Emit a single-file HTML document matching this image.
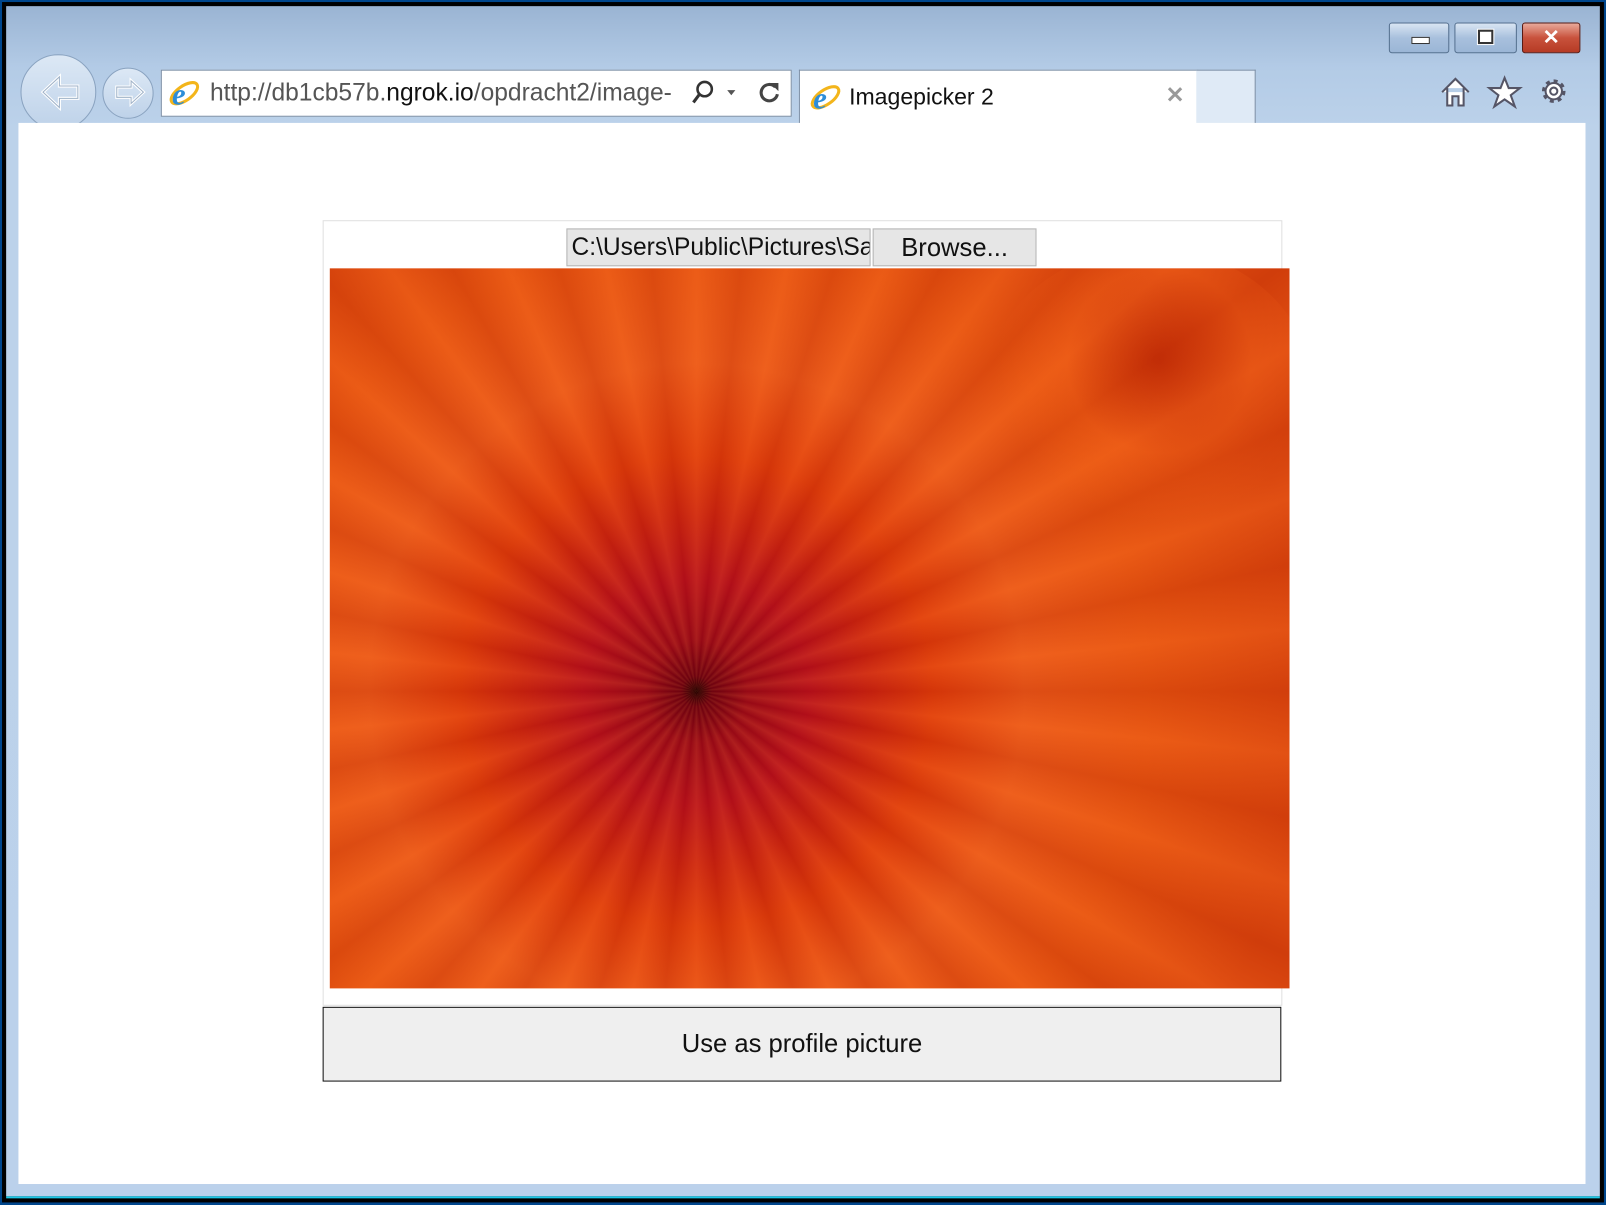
<!DOCTYPE html>
<html><head><meta charset="utf-8"><style>
html,body{margin:0;padding:0;width:1606px;height:1204px;overflow:hidden;background:#00468c;}
#w{position:absolute;left:0;top:0;width:1568px;height:1176px;transform:scale(1.02423);transform-origin:0 0;font-family:"Liberation Sans",sans-serif;}
.frame{position:absolute;left:2px;top:2px;right:2px;bottom:2px;background:#000;}
.inner{position:absolute;left:4px;top:4px;right:4px;bottom:4px;background:linear-gradient(#9ab4d3 0,#b3cbe6 60px,#bcd2ea 120px,#bbd1eb 100%);border-bottom:2px solid #1ec8e6;}
.client{position:absolute;left:18px;top:120px;width:1530px;height:1036px;background:#fff;}
.wb{position:absolute;top:22px;height:28px;border:1px solid #55708f;border-radius:3px;background:linear-gradient(#d9e5f3,#a8c0dd 50%,#9bb6d6);}
.abs{position:absolute;}
</style></head><body><div id="w">
<div class="frame"><div class="inner"></div></div>
<div class="wb" style="left:1356px;width:57px"><div class="abs" style="left:21px;top:13px;width:16px;height:5px;background:#fff;border:1px solid #333;"></div></div>
<div class="wb" style="left:1420px;width:59px"><div class="abs" style="left:22px;top:6px;width:11px;height:10px;border:2px solid #333;background:#fff;box-shadow:0 0 0 1px #fff;"></div></div>
<div class="wb" style="left:1486px;width:55px;background:linear-gradient(#e9a99a,#c8523c 50%,#b63b25);border-color:#5a1a12;color:#fff;font-weight:bold;font-size:20px;text-align:center;line-height:28px;">✕</div>
<div class="abs" style="left:20px;top:53px;width:72px;height:72px;border-radius:50%;border:1px solid #8aa3c0;background:linear-gradient(#dce8f5,#bed2e9);"></div>
<div class="abs" style="left:100px;top:66px;width:48px;height:48px;border-radius:50%;border:1px solid #8aa3c0;background:linear-gradient(#dce8f5,#bed2e9);"></div>
<svg class="abs" style="left:20px;top:53px" width="130" height="74"><path d="M22 37 L38 22 L38 31 L56 31 L56 43 L38 43 L38 52 Z" fill="none" stroke="#fff" stroke-width="3"/><path d="M22 37 L38 22 L38 31 L56 31 L56 43 L38 43 L38 52 Z" fill="none" stroke="#9fb2c8" stroke-width="1"/><path d="M120 37 L108 26 L108 32 L94 32 L94 42 L108 42 L108 48 Z" fill="none" stroke="#fff" stroke-width="3"/><path d="M120 37 L108 26 L108 32 L94 32 L94 42 L108 42 L108 48 Z" fill="none" stroke="#9fb2c8" stroke-width="1"/></svg>
<div class="abs" style="left:157px;top:68px;width:614px;height:44px;border:1px solid #7b8ea5;background:#fff;"></div>
<svg class="abs" style="left:163px;top:74px" width="34" height="34"><ellipse cx="17" cy="17" rx="15" ry="7" fill="none" stroke="#f3b51b" stroke-width="3" transform="rotate(-35 17 17)"/><text x="5" y="28" font-size="30" font-family="Liberation Serif" fill="#2d8dd8" font-style="italic" font-weight="bold">e</text></svg>
<div class="abs" style="left:205px;top:77px;font-size:24px;color:#555;white-space:nowrap;">http://db1cb57b.<span style="color:#111">ngrok.io</span>/opdracht2/image-</div>
<svg class="abs" style="left:672px;top:76px" width="100" height="30"><circle cx="16" cy="11" r="7" fill="none" stroke="#333" stroke-width="2.5"/><path d="M11 16 L5 24" stroke="#333" stroke-width="3"/><path d="M38 12 L46 12 L42 17Z" fill="#555"/><path d="M85 9 A8 8 0 1 0 87 16" fill="none" stroke="#444" stroke-width="3"/><path d="M80 5 L88 5 L88 13Z" fill="#444"/></svg>
<div class="abs" style="left:780px;top:68px;width:388px;height:53px;border:1px solid #7b8ea5;border-bottom:none;background:#fff;"></div>
<div class="abs" style="left:1168px;top:68px;width:57px;height:52px;border:1px solid #7b8ea5;border-left:none;border-bottom:none;background:#dfeaf6;"></div>
<svg class="abs" style="left:789px;top:78px" width="34" height="34"><ellipse cx="17" cy="17" rx="15" ry="7" fill="none" stroke="#f3b51b" stroke-width="3" transform="rotate(-35 17 17)"/><text x="5" y="28" font-size="30" font-family="Liberation Serif" fill="#2d8dd8" font-style="italic" font-weight="bold">e</text></svg>
<div class="abs" style="left:829px;top:82px;font-size:22.5px;color:#111;">Imagepicker 2</div>
<div class="abs" style="left:1138px;top:80px;font-size:22px;color:#999;font-weight:bold;">✕</div>
<svg class="abs" style="left:1404px;top:72px" width="132" height="36"><path d="M4 18 L17 5 L30 18 M9 14 V31 H14 V22 H20 V31 H25 V14" fill="#fff" stroke="#556" stroke-width="2"/><path d="M65 4 L69 14 L80 14 L71 21 L75 32 L65 25 L55 32 L59 21 L50 14 L61 14Z" fill="#fff" stroke="#556" stroke-width="2"/><circle cx="113" cy="17" r="9" fill="#fff" stroke="#556" stroke-width="5" stroke-dasharray="3.5 3.5"/><circle cx="113" cy="17" r="8" fill="#fff" stroke="#556" stroke-width="2"/><circle cx="113" cy="17" r="3.5" fill="none" stroke="#556" stroke-width="2"/></svg>
<div class="client"></div>
<div class="abs" style="left:315px;top:215px;width:935px;height:765px;border:1px solid #e0e0e0;"></div>
<div class="abs" style="left:553px;top:223px;width:297px;height:37px;border:1px solid #b4b4b4;background:#e6e6e6;overflow:hidden;white-space:nowrap;font-size:24px;line-height:36px;color:#111;padding-left:4px;box-sizing:border-box;">C:\Users\Public\Pictures\Sample</div>
<div class="abs" style="left:852px;top:223px;width:160px;height:37px;border:1px solid #b4b4b4;background:#e6e6e6;font-size:25px;line-height:36px;text-align:center;color:#111;box-sizing:border-box;">Browse...</div>
<div class="abs" style="left:322px;top:262px;width:937px;height:703px;overflow:hidden;background:radial-gradient(circle at 358px 413px,#1a0000 0,#6a0010 15px,#9a0a18 50px,#b8101c 110px,#cc2410 170px,#e03c0a 230px,#ec5818 320px,#e8530f 440px,#dc450c 600px);">
<div class="abs" style="left:0;top:0;width:937px;height:703px;background:repeating-conic-gradient(from 0deg at 358px 413px,rgba(255,140,60,.15) 0deg,rgba(120,0,0,.12) 6deg,rgba(255,140,60,.15) 12deg);"></div>
<div class="abs" style="left:640px;top:-20px;width:320px;height:280px;border-radius:50%;background:radial-gradient(circle at 170px 110px,rgba(170,20,0,.45),rgba(255,110,30,.2) 90px,rgba(0,0,0,0) 160px);"></div>
</div>
<div class="abs" style="left:315px;top:983px;width:936px;height:73px;border:1px solid #111;background:#efefef;box-sizing:border-box;font-size:25px;text-align:center;line-height:70px;color:#111;">Use as profile picture</div>
</div></body></html>
